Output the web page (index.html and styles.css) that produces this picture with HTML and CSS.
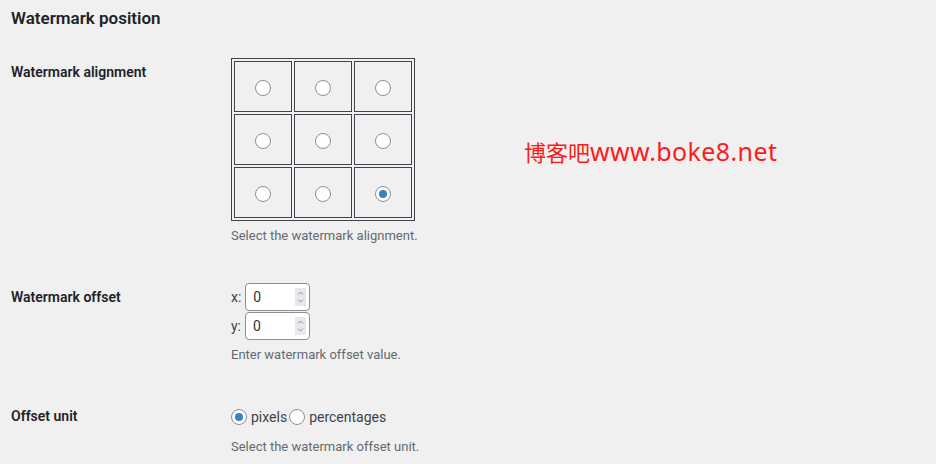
FILE: index.html
```html
<!DOCTYPE html>
<html lang="en">
<head>
<meta charset="utf-8">
<title>Watermark position</title>
<link rel="stylesheet" href="styles.css">
</head>
<body>
<div class="wrap">
  <h2 class="title">Watermark position</h2>
  <table class="form-table">
    <tbody>
      <tr>
        <th scope="row">Watermark alignment</th>
        <td>
          <table class="align-grid">
            <tr>
              <td><input type="radio" name="align" class="radio"></td>
              <td><input type="radio" name="align" class="radio"></td>
              <td><input type="radio" name="align" class="radio"></td>
            </tr>
            <tr>
              <td><input type="radio" name="align" class="radio"></td>
              <td><input type="radio" name="align" class="radio"></td>
              <td><input type="radio" name="align" class="radio"></td>
            </tr>
            <tr>
              <td><input type="radio" name="align" class="radio"></td>
              <td><input type="radio" name="align" class="radio"></td>
              <td><input type="radio" name="align" class="radio" checked></td>
            </tr>
          </table>
          <p class="description">Select the watermark alignment.</p>
        </td>
      </tr>
      <tr>
        <th scope="row">Watermark offset</th>
        <td>
          <div class="offset-line">
            <label class="offset-label">x:
              <span class="num-box">
                <input type="text" class="num" value="0">
                <span class="spin"><svg width="11" height="18" viewBox="0 0 11 18"><path d="M3 6.5 5.5 4 8 6.5M3 11.5 5.5 14 8 11.5" fill="none" stroke="#8c8f94" stroke-width="1"/></svg></span>
              </span>
            </label>
          </div>
          <div class="offset-line">
            <label class="offset-label">y:
              <span class="num-box">
                <input type="text" class="num" value="0">
                <span class="spin"><svg width="11" height="18" viewBox="0 0 11 18"><path d="M3 6.5 5.5 4 8 6.5M3 11.5 5.5 14 8 11.5" fill="none" stroke="#8c8f94" stroke-width="1"/></svg></span>
              </span>
            </label>
          </div>
          <p class="description">Enter watermark offset value.</p>
        </td>
      </tr>
      <tr>
        <th scope="row">Offset unit</th>
        <td>
          <div class="unit-line">
            <label class="unit"><input type="radio" name="unit" class="radio" checked>pixels</label>
            <label class="unit"><input type="radio" name="unit" class="radio">percentages</label>
          </div>
          <p class="description">Select the watermark offset unit.</p>
        </td>
      </tr>
    </tbody>
  </table>
  <div class="watermark"><span class="wm-cjk">博客吧</span><span class="wm-latin">www.boke8.net</span></div>
</div>
</body>
</html>
```

FILE: styles.css
```css
html, body {
  margin: 0;
  padding: 0;
  background: #f0f0f1;
}
body {
  font-family: Roboto, "Noto Sans", sans-serif;
  font-size: 13px;
  color: #1d2327;
}
.wrap {
  position: relative;
  padding: 7px 0 0 11px;
  height: 457px;
  overflow: hidden;
}
.title {
  margin: 0 0 14px;
  font-size: 17px;
  line-height: 22px;
  font-weight: 600;
}
.form-table {
  border-collapse: collapse;
}
.form-table > tbody > tr > th {
  width: 200px;
  padding: 20px 10px 0 0;
  vertical-align: top;
  text-align: left;
  font-size: 14px;
  line-height: 18px;
  font-weight: 600;
}
.form-table > tbody > tr > td {
  padding: 15px 10px;
  vertical-align: top;
}
.align-grid {
  border: 1px solid #3c434a;
  border-spacing: 2px;
}
.align-grid td {
  border: 1px solid #3c434a;
  width: 56px;
  height: 49px;
  padding: 0;
  text-align: center;
  vertical-align: middle;
}
.radio {
  appearance: none;
  -webkit-appearance: none;
  box-sizing: border-box;
  width: 16px;
  height: 16px;
  margin: 0;
  border: 1px solid #8c8f94;
  border-radius: 50%;
  background: #fff;
  vertical-align: middle;
  display: inline-grid;
  place-items: center;
}
.align-grid .radio {
  position: relative;
  top: 1px;
}
.radio:checked::before {
  content: "";
  width: 8px;
  height: 8px;
  border-radius: 50%;
  background: #3582c4;
}
.description {
  margin: 5px 0 7px;
  font-size: 13px;
  line-height: 20px;
  color: #646970;
}
.offset-line {
  height: 28px;
  margin-bottom: 1px;
  display: flex;
  align-items: center;
  font-size: 14px;
  color: #3c434a;
}
.offset-label {
  display: flex;
  align-items: center;
  gap: 4px;
}
.num-box {
  box-sizing: border-box;
  display: inline-flex;
  align-items: center;
  width: 65px;
  height: 28px;
  border: 1px solid #8c8f94;
  border-radius: 4px;
  background: #fff;
}
.num {
  flex: 1;
  min-width: 0;
  height: 100%;
  margin: 0;
  padding: 0 0 0 7px;
  border: 0;
  background: transparent;
  font-family: inherit;
  font-size: 14px;
  color: #2c3338;
  outline: none;
}
.spin {
  display: block;
  width: 11px;
  height: 18px;
  margin-right: 3px;
  background: #e9e9ed;
}
.spin svg {
  display: block;
}
.unit-line {
  height: 30px;
  display: flex;
  align-items: center;
  font-size: 14px;
  color: #3c434a;
}
.unit {
  display: inline-flex;
  align-items: center;
  gap: 4px;
  margin-right: 2px;
}
.watermark {
  position: absolute;
  left: 524px;
  top: 136px;
  line-height: 30px;
  color: #ff1a1a;
  white-space: nowrap;
}
.wm-cjk {
  font-family: "Noto Sans CJK SC", sans-serif;
  font-size: 22px;
}
.wm-latin {
  font-family: "Noto Sans", sans-serif;
  font-size: 25px;
  letter-spacing: 0.4px;
}
```
